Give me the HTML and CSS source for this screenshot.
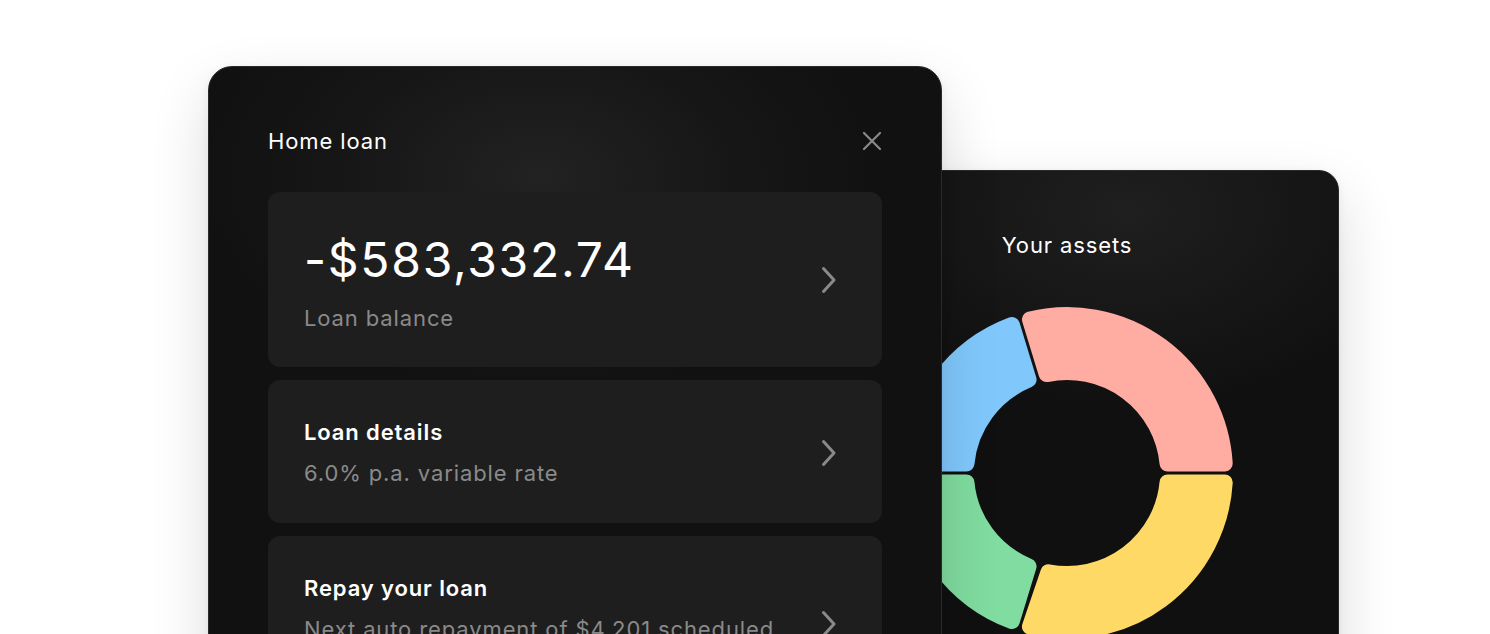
FILE: index.html
```html
<!DOCTYPE html>
<html lang="en">
<head>
  <meta charset="UTF-8">
  <meta name="viewport" content="width=device-width, initial-scale=1.0">
  <title>Home loan</title>
  <link rel="stylesheet" href="styles.css">
</head>
<body>
  <div class="stage">
    <section class="panel loan-panel">
      <div class="panel-header">
        <h2 class="panel-title">Home loan</h2>
        <svg class="close-icon" width="20" height="20" viewBox="0 0 20 20" aria-label="Close">
          <path d="M2 2 L18 18 M18 2 L2 18" stroke="#8a8a8a" stroke-width="2.2" stroke-linecap="round" fill="none"/>
        </svg>
      </div>

      <div class="row-card balance-card">
        <div class="row-text">
          <div class="amount">-$583,332.74</div>
          <div class="row-sub">Loan balance</div>
        </div>
        <svg class="chevron" width="16" height="28" viewBox="0 0 16 28">
          <path d="M2.5 2.5 L13 14 L2.5 25.5" stroke="#8a8a8a" stroke-width="3" stroke-linecap="round" stroke-linejoin="round" fill="none"/>
        </svg>
      </div>

      <div class="row-card">
        <div class="row-text">
          <div class="row-title">Loan details</div>
          <div class="row-sub">6.0% p.a. variable rate</div>
        </div>
        <svg class="chevron" width="16" height="28" viewBox="0 0 16 28">
          <path d="M2.5 2.5 L13 14 L2.5 25.5" stroke="#8a8a8a" stroke-width="3" stroke-linecap="round" stroke-linejoin="round" fill="none"/>
        </svg>
      </div>

      <div class="row-card">
        <div class="row-text">
          <div class="row-title">Repay your loan</div>
          <div class="row-sub wrap">Next auto repayment of $4,201 scheduled for 15 July</div>
        </div>
        <svg class="chevron" width="16" height="28" viewBox="0 0 16 28">
          <path d="M2.5 2.5 L13 14 L2.5 25.5" stroke="#8a8a8a" stroke-width="3" stroke-linecap="round" stroke-linejoin="round" fill="none"/>
        </svg>
      </div>
    </section>

    <section class="panel assets-panel">
      <h2 class="panel-title assets-title">Your assets</h2>
      <svg class="donut" width="340" height="340" viewBox="-170 -170 340 340">
        <g stroke-width="16" stroke-linejoin="round">
          <path fill="#ffada2" stroke="#ffada2" d="M -37.05 -153.59 A 158 158 0 0 1 157.72 -9.48 L 100.55 -9.49 A 101 101 0 0 0 -20.32 -98.93 Z"/>
          <path fill="#ffd966" stroke="#ffd966" d="M 157.72 9.48 A 158 158 0 0 1 -37.05 153.59 L -18.59 99.27 A 101 101 0 0 0 100.55 9.49 Z"/>
          <path fill="#80dca0" stroke="#80dca0" d="M -55.17 148.05 A 158 158 0 0 1 -157.72 9.48 L -100.55 9.49 A 101 101 0 0 0 -38.47 93.38 Z"/>
          <path fill="#80c8fc" stroke="#80c8fc" d="M -157.72 -9.48 A 158 158 0 0 1 -55.17 -148.05 L -38.47 -93.38 A 101 101 0 0 0 -100.55 -9.49 Z"/>
        </g>
      </svg>
    </section>
  </div>
</body>
</html>
```

FILE: styles.css
```css
body {
  margin: 0;
  background: #ffffff;
  font-family: Inter, "Noto Sans", sans-serif;
  overflow: hidden;
  height: 634px;
}
.stage {
  display: flex;
  align-items: flex-start;
  padding: 66px 0 0 208px;
}
.panel {
  box-sizing: border-box;
  border: 1px solid #2a2a2a;
  color: #ffffff;
  box-shadow: 0 24px 60px rgba(0, 0, 0, 0.14), 0 2px 10px rgba(0, 0, 0, 0.06);
}
.panel-title {
  margin: 0;
  font-size: 22px;
  font-weight: 400;
  line-height: 30px;
  letter-spacing: 0.04em;
}
.loan-panel {
  position: relative;
  z-index: 1;
  width: 734px;
  height: 760px;
  padding: 59px 59px 0;
  border-radius: 24px;
  background: radial-gradient(ellipse 340px 220px at 330px 110px, #222222 0%, #161616 60%, #111111 100%);
}
.panel-header {
  display: flex;
  justify-content: space-between;
  align-items: center;
  margin-bottom: 36px;
}
.row-card {
  display: flex;
  align-items: center;
  justify-content: space-between;
  background: #1e1e1e;
  border-radius: 12px;
  padding: 37px 45px 35px 36px;
  margin-bottom: 13px;
}
.balance-card {
  padding-top: 40px;
  padding-bottom: 34px;
}
.balance-card .chevron {
  margin-bottom: 6px;
}
.amount {
  font-size: 48px;
  line-height: 56px;
  font-weight: 400;
  letter-spacing: 0.036em;
  margin-bottom: 15px;
}
.row-title {
  font-size: 22px;
  line-height: 30px;
  font-weight: 600;
  letter-spacing: 0.04em;
  margin-bottom: 11px;
}
.row-sub {
  font-size: 22px;
  line-height: 30px;
  color: #8a8a8a;
  letter-spacing: 0.04em;
  white-space: nowrap;
}
.row-sub.wrap {
  white-space: normal;
  max-width: 500px;
}
.chevron {
  flex-shrink: 0;
}
.assets-panel {
  width: 544px;
  height: 520px;
  margin: 104px 0 0 -147px;
  border-radius: 20px;
  display: flex;
  flex-direction: column;
  align-items: center;
  padding-top: 59px;
  background: radial-gradient(ellipse 300px 200px at 330px 40px, #1f1f1f 0%, #161616 60%, #101010 100%);
}
.assets-title {
  margin-bottom: 43px;
}
```
